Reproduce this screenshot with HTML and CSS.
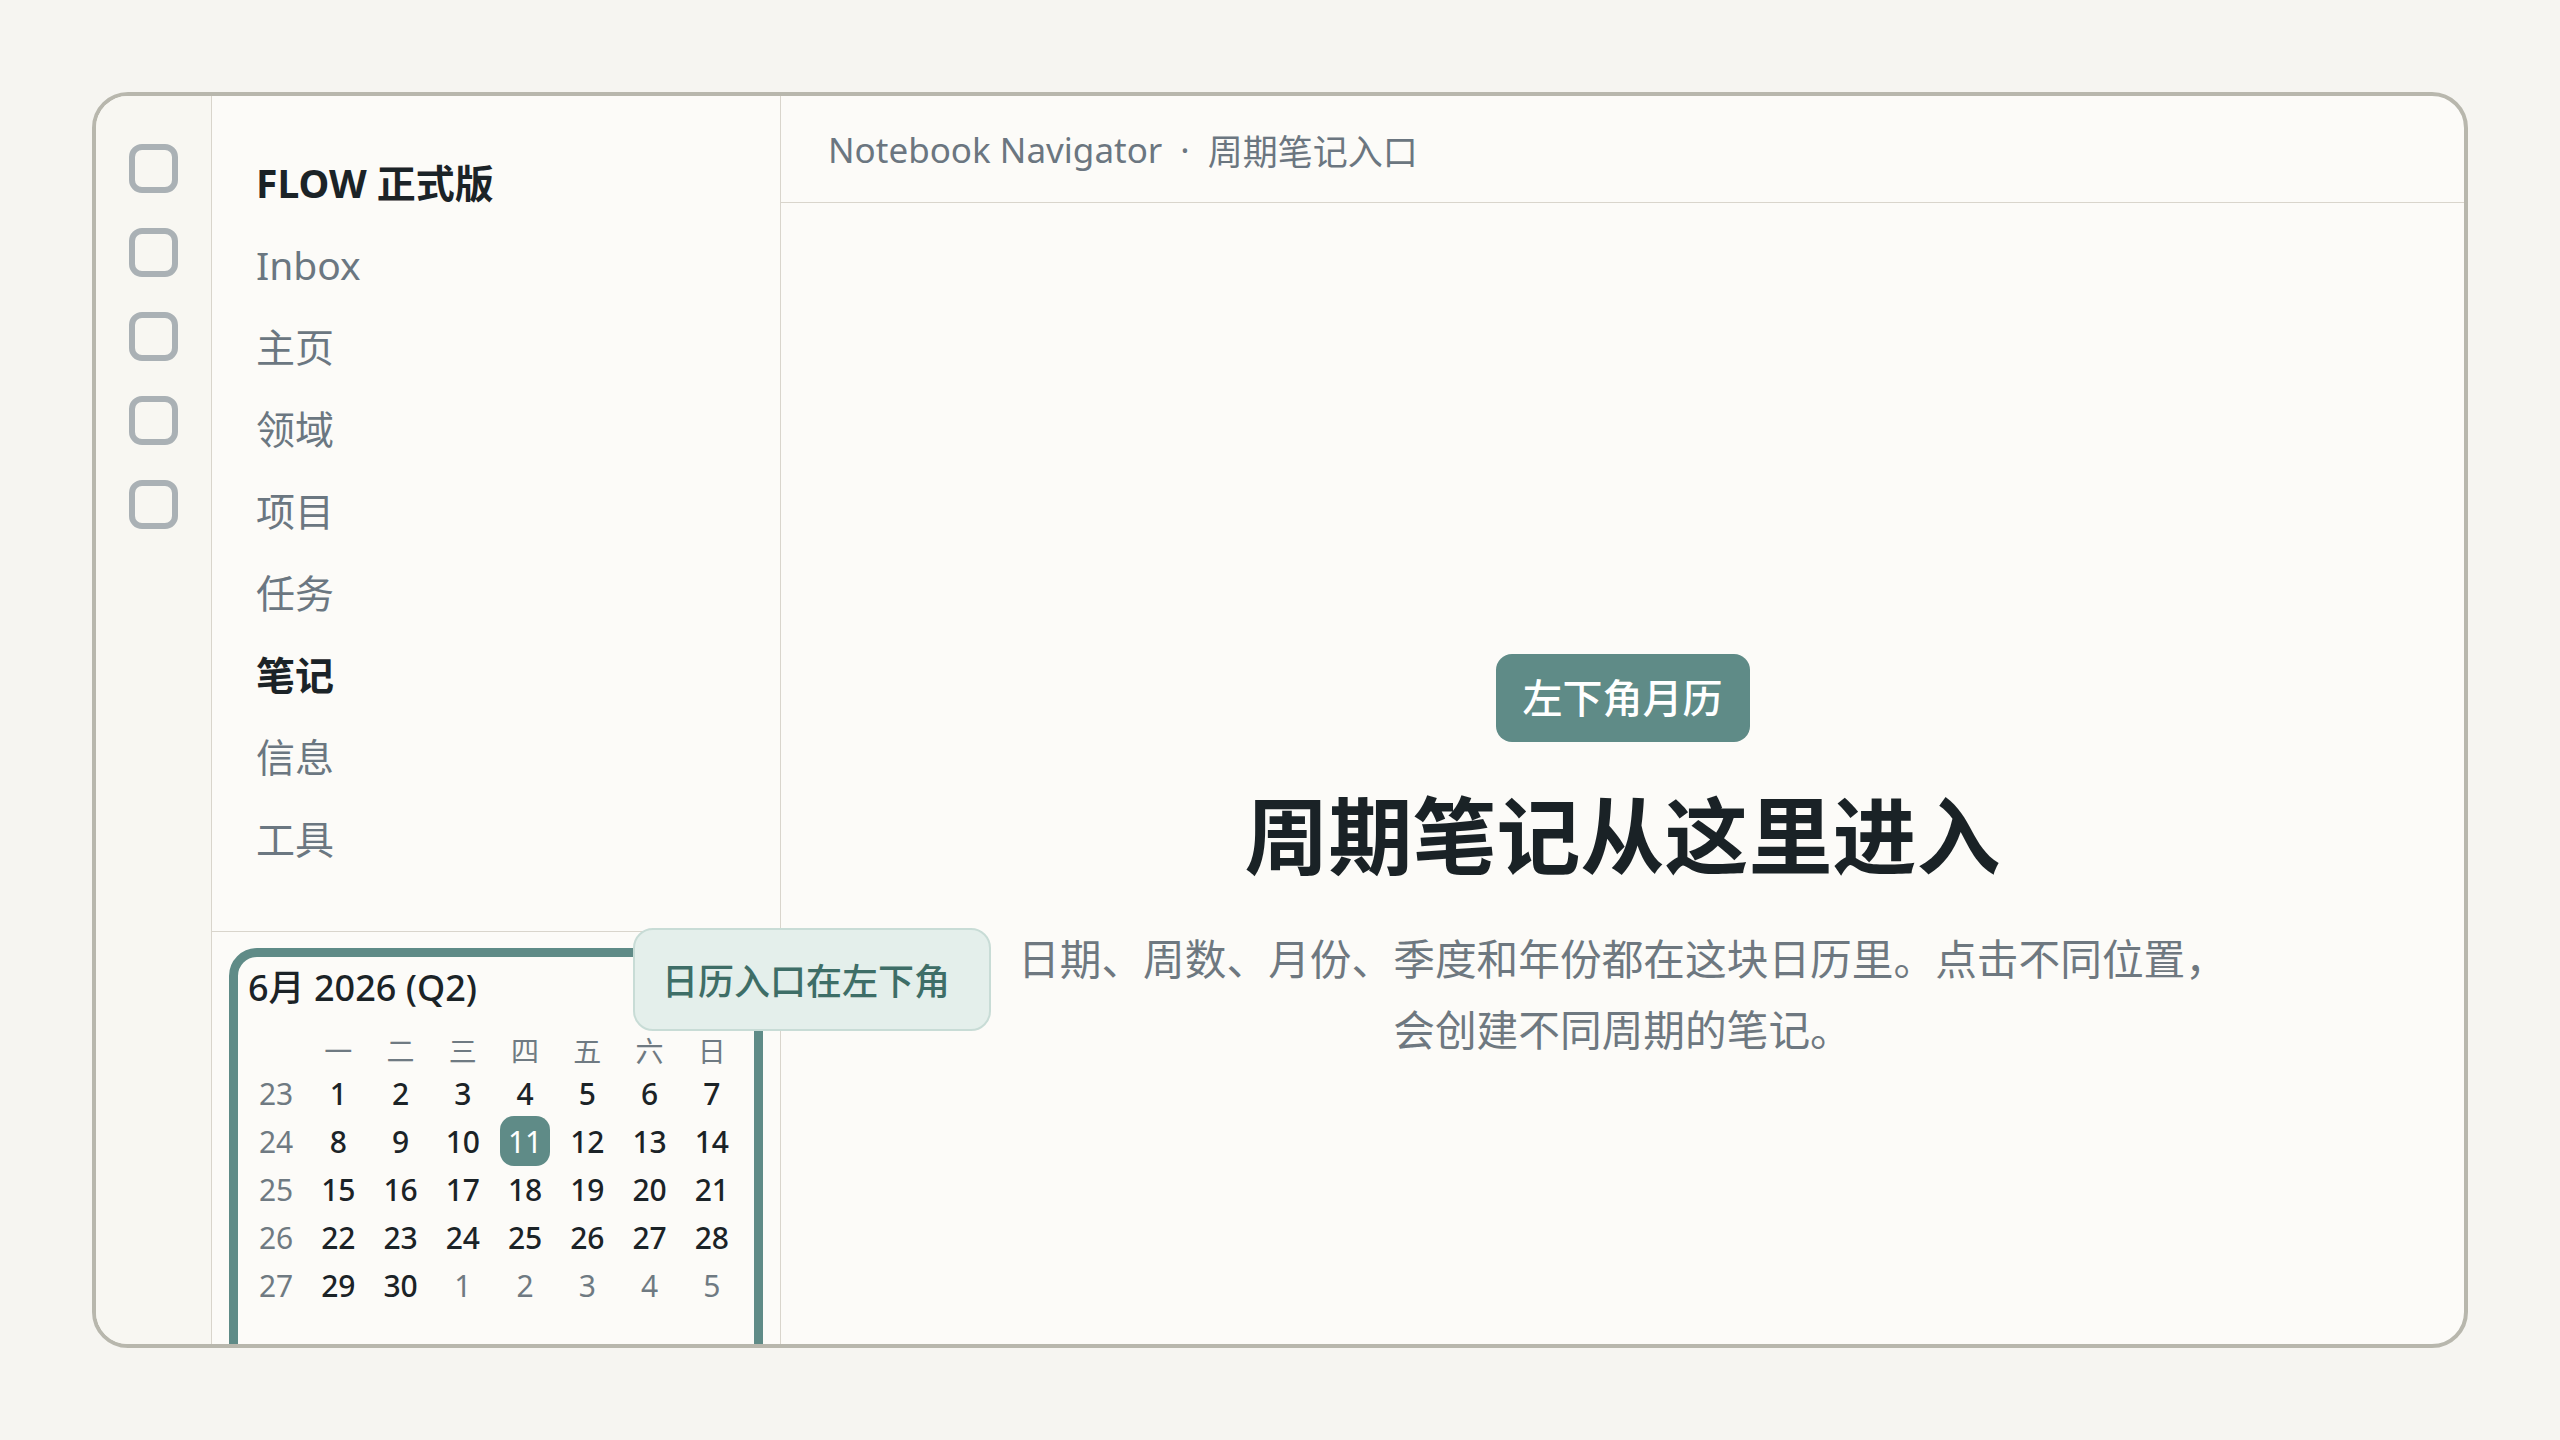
FILE: index.html
```html
<!DOCTYPE html>
<html lang="zh-CN">
<head>
<meta charset="utf-8">
<title>Notebook Navigator</title>
<link rel="stylesheet" href="styles.css">
</head>
<body>
<div class="frame">
  <aside class="rail">
    <span class="rail-icon"></span>
    <span class="rail-icon"></span>
    <span class="rail-icon"></span>
    <span class="rail-icon"></span>
    <span class="rail-icon"></span>
  </aside>
  <aside class="sidebar">
    <nav class="nav">
      <div class="nav-item strong">FLOW 正式版</div>
      <div class="nav-item">Inbox</div>
      <div class="nav-item">主页</div>
      <div class="nav-item">领域</div>
      <div class="nav-item">项目</div>
      <div class="nav-item">任务</div>
      <div class="nav-item strong">笔记</div>
      <div class="nav-item">信息</div>
      <div class="nav-item">工具</div>
    </nav>
    <section class="cal-section">
      <div class="cal-card">
        <div class="cal-title">6月 2026 (Q2)</div>
        <div class="cal-grid">
          <span class="wd"></span><span class="wd">一</span><span class="wd">二</span><span class="wd">三</span><span class="wd">四</span><span class="wd">五</span><span class="wd">六</span><span class="wd">日</span>
          <span class="wk">23</span><span class="d">1</span><span class="d">2</span><span class="d">3</span><span class="d">4</span><span class="d">5</span><span class="d">6</span><span class="d">7</span>
          <span class="wk">24</span><span class="d">8</span><span class="d">9</span><span class="d">10</span><span class="d"><span class="today">11</span></span><span class="d">12</span><span class="d">13</span><span class="d">14</span>
          <span class="wk">25</span><span class="d">15</span><span class="d">16</span><span class="d">17</span><span class="d">18</span><span class="d">19</span><span class="d">20</span><span class="d">21</span>
          <span class="wk">26</span><span class="d">22</span><span class="d">23</span><span class="d">24</span><span class="d">25</span><span class="d">26</span><span class="d">27</span><span class="d">28</span>
          <span class="wk">27</span><span class="d">29</span><span class="d">30</span><span class="d out">1</span><span class="d out">2</span><span class="d out">3</span><span class="d out">4</span><span class="d out">5</span>
        </div>
      </div>
      <div class="tooltip">日历入口在左下角</div>
    </section>
  </aside>
  <main class="main">
    <header class="topbar">Notebook Navigator<span class="sep">·</span>周期笔记入口</header>
    <div class="hero">
      <div class="badge">左下角月历</div>
      <h1 class="title">周期笔记从这里进入</h1>
      <p class="desc">日期、周数、月份、季度和年份都在这块日历里。点击不同位置，<br>会创建不同周期的笔记。</p>
    </div>
  </main>
</div>
</body>
</html>
```

FILE: styles.css
```css
html, body {
  margin: 0;
  padding: 0;
  background: #f6f5f1;
}
body {
  font-family: "Noto Sans", "Noto Sans CJK SC", sans-serif;
  color: #1b2327;
}
.frame {
  box-sizing: border-box;
  width: 2376px;
  height: 1256px;
  margin: 92px;
  border: 4px solid #b8b7ad;
  border-radius: 36px;
  background: #fcfbf8;
  overflow: hidden;
  display: flex;
}
.rail {
  box-sizing: border-box;
  width: 116px;
  flex: none;
  background: #f8f7f2;
  border-right: 1px solid #d9d5cc;
  display: flex;
  flex-direction: column;
  align-items: center;
  padding-top: 48px;
  gap: 35px;
}
.rail-icon {
  box-sizing: border-box;
  width: 49px;
  height: 49px;
  border: 6px solid #aab1b5;
  border-radius: 13px;
}
.sidebar {
  box-sizing: border-box;
  width: 569px;
  flex: none;
  border-right: 1px solid #d9d5cc;
  display: flex;
  flex-direction: column;
  position: relative;
  z-index: 2;
}
.nav {
  padding: 46px 0 51px 44px;
}
.nav-item {
  height: 82px;
  line-height: 82px;
  font-size: 39px;
  color: #6b7781;
  white-space: nowrap;
}
.nav-item.strong {
  color: #1b2327;
  font-weight: 700;
}
.cal-section {
  flex: 1;
  border-top: 1px solid #d9d5cc;
  padding: 16px 17px 0 17px;
  position: relative;
}
.cal-card {
  box-sizing: border-box;
  width: 534px;
  border: 9px solid #5f8b87;
  border-radius: 28px;
  background: #fcfbf8;
  padding: 11px 11px 80px 7px;
}
.cal-title {
  height: 40px;
  line-height: 40px;
  font-size: 36px;
  font-weight: 500;
  margin-left: 3px;
  margin-bottom: 23px;
  color: #1b2327;
}
.cal-grid {
  width: 498px;
  display: grid;
  grid-template-columns: repeat(8, 1fr);
  grid-template-rows: 38px repeat(5, 48px);
  font-size: 30px;
}
.cal-grid > span {
  display: flex;
  align-items: center;
  justify-content: center;
}
.wd {
  font-size: 28px;
  color: #6f7a82;
}
.wk {
  color: #6f7a82;
}
.d {
  color: #1b2327;
  font-weight: 500;
}
.d.out {
  color: #6f7a82;
  font-weight: 400;
}
.today {
  display: flex;
  align-items: center;
  justify-content: center;
  width: 50px;
  height: 50px;
  border-radius: 14px;
  background: #5f8b87;
  color: #ffffff;
  font-weight: 400;
  flex: none;
}
.tooltip {
  position: absolute;
  left: 421px;
  top: -4px;
  box-sizing: border-box;
  height: 103px;
  padding: 0 39px 0 27px;
  display: flex;
  align-items: center;
  background: #e4efeb;
  border: 2px solid #c8dcd6;
  border-radius: 20px;
  font-size: 36px;
  font-weight: 500;
  color: #3e6e67;
  white-space: nowrap;
}
.main {
  flex: 1;
  display: flex;
  flex-direction: column;
  min-width: 0;
}
.topbar {
  box-sizing: border-box;
  height: 107px;
  border-bottom: 1px solid #d9d5cc;
  padding-left: 47px;
  display: flex;
  align-items: center;
  font-size: 35px;
  color: #6b7680;
  white-space: nowrap;
}
.sep {
  padding: 0 18px;
}
.hero {
  display: flex;
  flex-direction: column;
  align-items: center;
  padding-top: 451px;
}
.badge {
  height: 88px;
  line-height: 88px;
  padding: 0 27px;
  border-radius: 16px;
  background: #5f8b87;
  color: #ffffff;
  font-size: 40px;
  font-weight: 500;
}
.title {
  margin: 43px 0 0 0;
  font-size: 84px;
  line-height: 101px;
  font-weight: 700;
  color: #1a2226;
}
.desc {
  margin: 37px 0 0 0;
  font-size: 41.7px;
  line-height: 71px;
  text-align: center;
  color: #6e7880;
}
```
